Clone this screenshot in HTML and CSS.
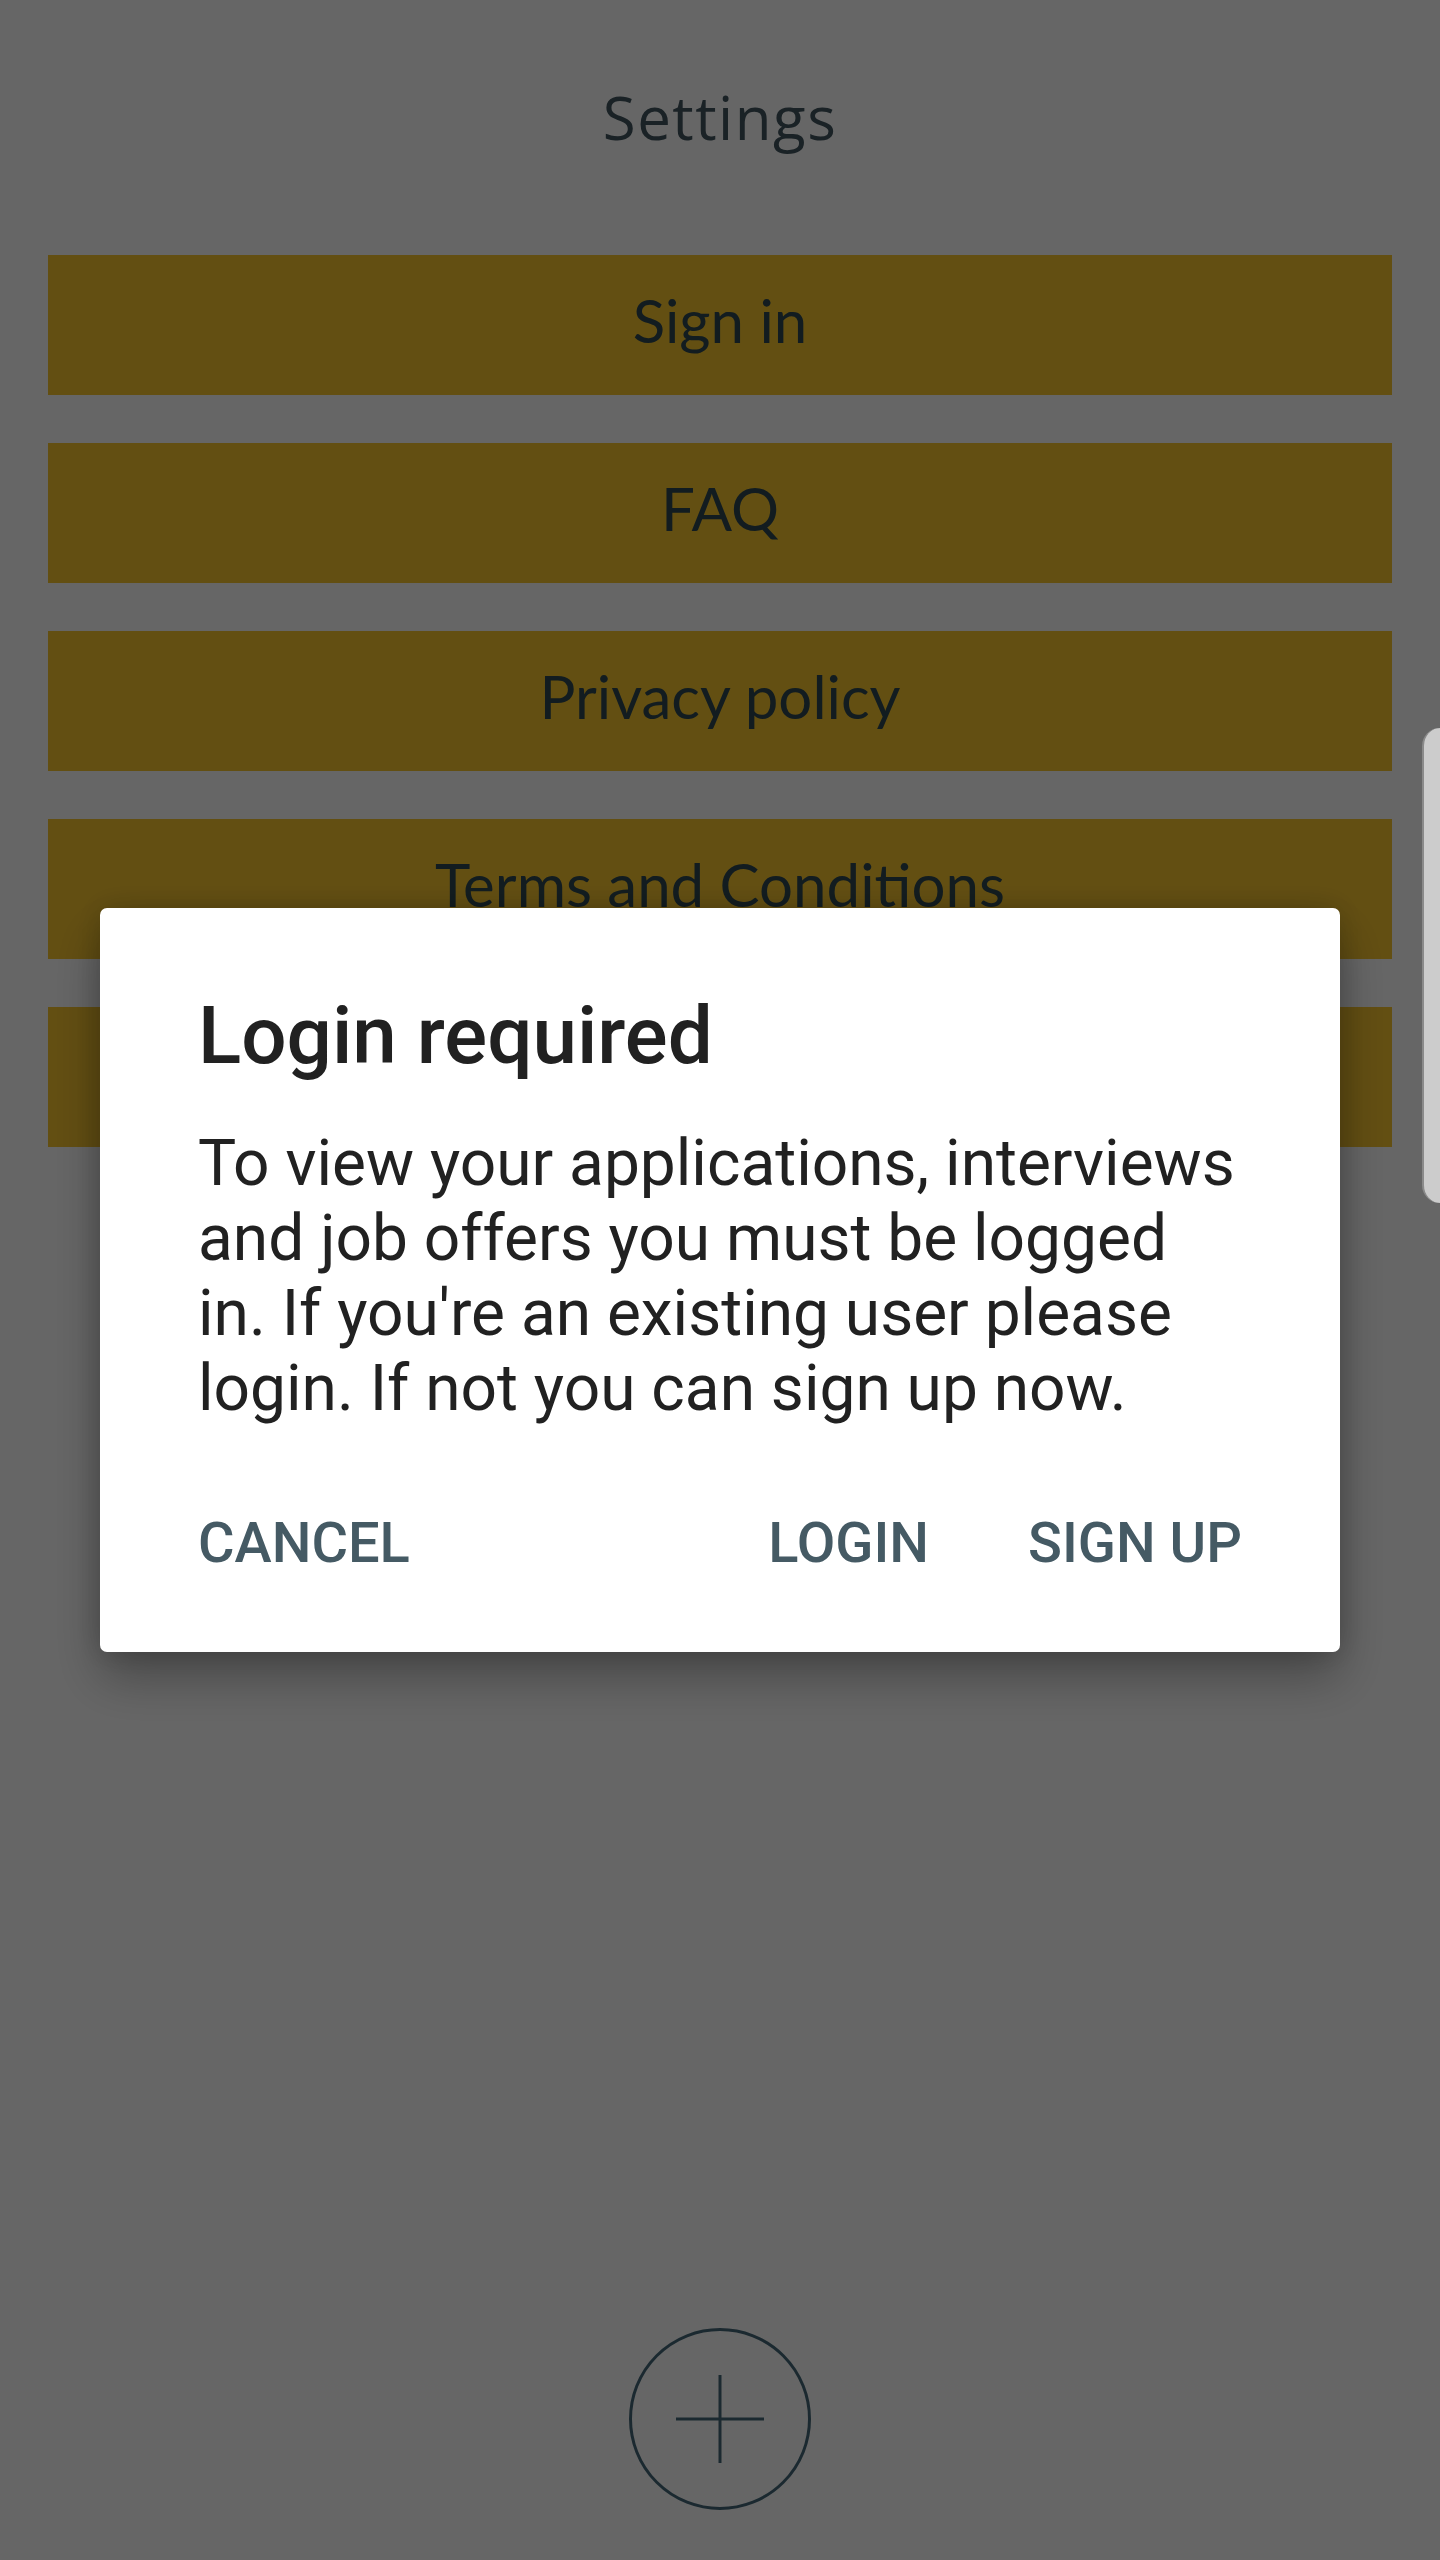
FILE: index.html
```html
<!DOCTYPE html>
<html lang="en">
<head>
<meta charset="utf-8">
<title>Settings</title>
<link rel="stylesheet" href="styles.css">
</head>
<body>
<div class="page">
  <header class="header">Settings</header>
  <nav class="menu">
    <a class="menu-item">Sign in</a>
    <a class="menu-item">FAQ</a>
    <a class="menu-item">Privacy policy</a>
    <a class="menu-item">Terms and Conditions</a>
    <a class="menu-item"></a>
  </nav>
  <div class="fab-wrap">
    <button class="fab" aria-label="Add">
      <svg width="88" height="88" viewBox="0 0 88 88">
        <line x1="0" y1="44" x2="88" y2="44" stroke="currentColor" stroke-width="3"/>
        <line x1="44" y1="0" x2="44" y2="88" stroke="currentColor" stroke-width="3"/>
      </svg>
    </button>
  </div>
</div>

<div class="scrim">
  <div class="dialog" role="dialog">
    <h2 class="dialog-title">Login required</h2>
    <p class="dialog-body">To view your applications, interviews and job offers you must be logged in. If you're an existing user please login. If not you can sign up now.</p>
    <div class="dialog-actions">
      <button class="action">CANCEL</button>
      <button class="action action-push">LOGIN</button>
      <button class="action">SIGN UP</button>
    </div>
  </div>
</div>

<div class="edge-handle"></div>
</body>
</html>
```

FILE: styles.css
```css
* { box-sizing: border-box; }

html, body {
  margin: 0;
  padding: 0;
  background: #ffffff;
}

.page {
  min-height: 2560px;
  display: flex;
  flex-direction: column;
}

.header {
  padding-top: 82px;
  height: 152px;
  line-height: 70px;
  text-align: center;
  font-family: "Open Sans", Lato, sans-serif;
  font-size: 60px;
  letter-spacing: 1.5px;
  color: #43565f;
}

.menu {
  margin-top: 103px;
  padding: 0 48px;
  display: flex;
  flex-direction: column;
  gap: 48px;
}

.menu-item {
  height: 140px;
  padding-bottom: 10px;
  background: #f7c52f;
  display: flex;
  align-items: center;
  justify-content: center;
  font-family: Lato, "Open Sans", sans-serif;
  font-size: 60px;
  line-height: 1.2;
  color: #2f4850;
}

.fab-wrap {
  margin-top: auto;
  padding-bottom: 50px;
  display: flex;
  justify-content: center;
}

.fab {
  width: 182px;
  height: 182px;
  border-radius: 50%;
  border: 3px solid #456878;
  background: transparent;
  color: #456878;
  padding: 0;
  display: flex;
  align-items: center;
  justify-content: center;
}

.scrim {
  position: fixed;
  inset: 0;
  background: rgba(0, 0, 0, 0.6);
  display: flex;
  justify-content: center;
  align-items: flex-start;
  padding-top: 908px;
}

.dialog {
  width: 1240px;
  height: 744px;
  background: #ffffff;
  border-radius: 7px;
  padding: 78px 98px 0 98px;
  box-shadow: 0 26px 50px rgba(0, 0, 0, 0.3), 0 0 30px rgba(0, 0, 0, 0.18);
  font-family: Roboto, "Liberation Sans", sans-serif;
}

.dialog-title {
  margin: 0;
  font-size: 80px;
  line-height: 100px;
  font-weight: 500;
  color: #212121;
}

.dialog-body {
  margin: 40px 0 0 0;
  font-size: 64px;
  line-height: 75px;
  font-weight: 400;
  color: #212121;
}

.dialog-actions {
  margin-top: 84px;
  display: flex;
  gap: 99px;
}

.action {
  border: 0;
  background: transparent;
  padding: 0;
  font-family: Roboto, "Liberation Sans", sans-serif;
  font-size: 56px;
  line-height: 66px;
  font-weight: 500;
  color: #455a64;
}

.action-push {
  margin-left: auto;
}

.edge-handle {
  position: fixed;
  top: 728px;
  right: 0;
  width: 18px;
  height: 475px;
  background: #cccccc;
  border-left: 2px solid #8a8a8a;
  border-radius: 22px 0 0 22px;
}
```
